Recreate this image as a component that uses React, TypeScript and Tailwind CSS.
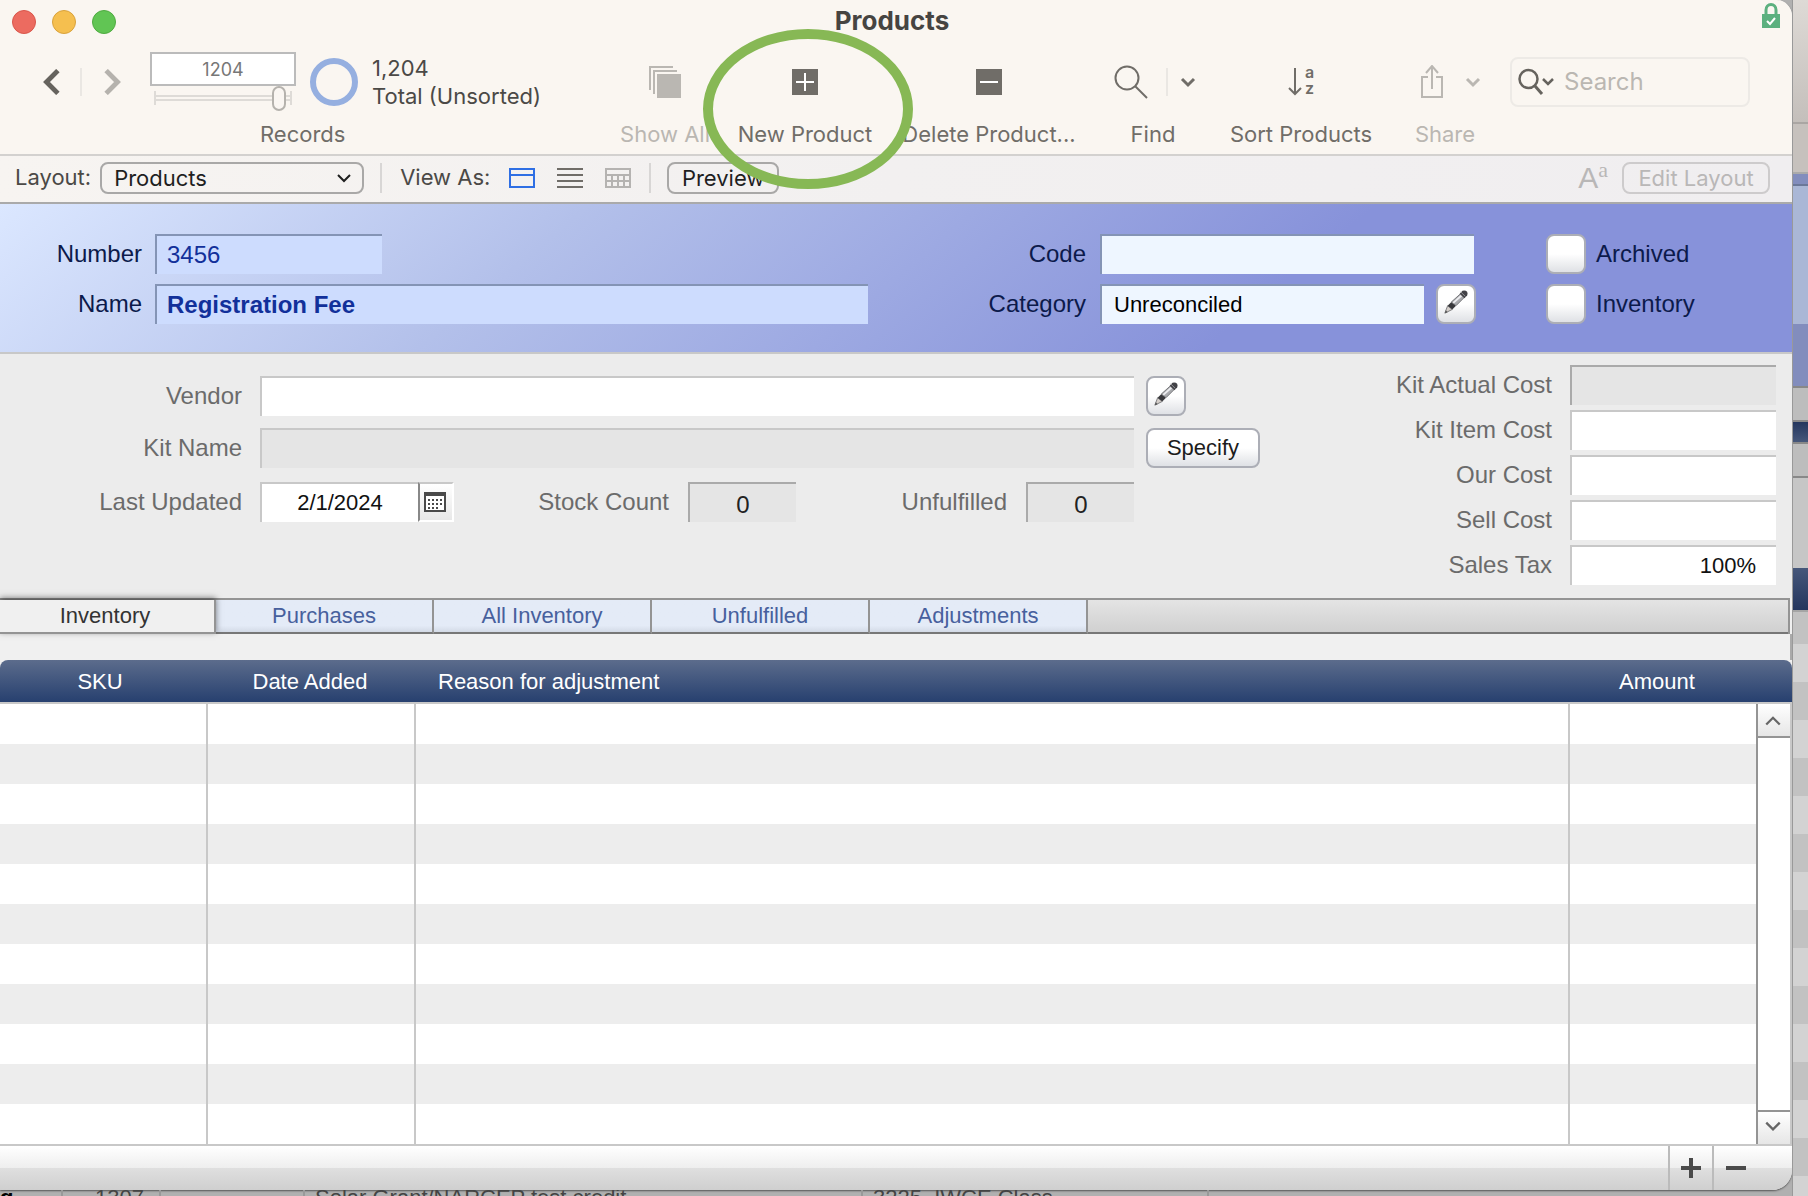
import type { ReactNode } from 'react'

const inputBase = 'h-10 rounded-none border-t-2 border-l-2 outline-none'
const tabs = ['Inventory', 'Purchases', 'All Inventory', 'Unfulfilled', 'Adjustments']
const costs = [
  { id: 'kit-actual', label: 'Kit Actual Cost', value: '', locked: true },
  { id: 'kit-item', label: 'Kit Item Cost', value: '', locked: false },
  { id: 'our-cost', label: 'Our Cost', value: '', locked: false },
  { id: 'sell-cost', label: 'Sell Cost', value: '', locked: false },
  { id: 'sales-tax', label: 'Sales Tax', value: '100%', locked: false },
]

function Chevron({ dir, size = 14, width = 3 }: { dir: 'up' | 'down' | 'left' | 'right'; size?: number; width?: number }) {
  const paths = {
    up: 'M2 12 8 6 14 12',
    down: 'M2 5 8 11 14 5',
    left: 'M11 1 4 8 11 15',
    right: 'M5 1 12 8 5 15',
  }
  return (
    <svg width={size} height={size} viewBox="0 0 16 16" fill="none" stroke="currentColor" strokeWidth={width} aria-hidden="true">
      <path d={paths[dir]} />
    </svg>
  )
}

function PencilButton({ label }: { label: string }) {
  return (
    <button
      aria-label={label}
      className="flex h-10 w-10 shrink-0 items-center justify-center rounded-lg border-2 border-[#acaeb6] bg-linear-to-b from-white from-50% to-[#dfe1e5] pb-1"
    >
      <svg width="26" height="26" viewBox="0 0 28 28" aria-hidden="true">
        <path d="M2 26 5 18 10 22Z" fill="#d5cfca" stroke="#77777a" strokeWidth="1" />
        <path d="m2 26 1-3 2 2Z" fill="#555" />
        <path d="M5 18 9 14 14 18 10 22Z" fill="#38383c" />
        <path d="M9 14 19 5 23 9 14 18Z" fill="#a9aaae" stroke="#6f7074" strokeWidth="1" />
        <path d="M11 15 20 7" stroke="#ededf0" strokeWidth="2" />
        <path d="M18 5 21 2Q24 1 26 3 27 5 26 7L23 10Z" fill="#424247" />
        <path d="m19 3 5 5" stroke="#9a9a9e" strokeWidth="1" />
      </svg>
    </button>
  )
}

function ToolItem({ label, icon, className, muted = false, children }: { label: string; icon: ReactNode; className: string; muted?: boolean; children?: ReactNode }) {
  return (
    <div className={`relative flex shrink-0 flex-col ${className} ${muted ? 'text-[#bab7b2]' : 'text-[#706d68]'}`}>
      <button disabled={muted} className="flex flex-col items-center whitespace-nowrap">
        <span className="flex h-[76px] items-center justify-center">{icon}</span>
        <span className="h-7 leading-7">{label}</span>
      </button>
      {children}
    </div>
  )
}

function TitleBar() {
  return (
    <div className="relative flex h-11 items-center pl-3">
      <div className="flex gap-4">
        <button aria-label="Close" className="size-6 rounded-full border border-[#d9564b] bg-[#ec6b60]" />
        <button aria-label="Minimise" className="size-6 rounded-full border border-[#d9a23c] bg-[#f5bf4f]" />
        <button aria-label="Zoom" className="size-6 rounded-full border border-[#4fab41] bg-[#61c554]" />
      </div>
      <h1 className="absolute inset-x-0 pr-2 pb-0.5 text-center text-[26px] font-bold text-[#464441]">Products</h1>
      <svg className="absolute top-[3px] right-3 h-[25px] w-[18px]" viewBox="0 0 18 25" aria-hidden="true">
        <path d="M4 12V7a5 5.500 0 0 1 10 0v5" fill="none" stroke="#5cb07f" strokeWidth="3" />
        <path d="M0 11h18v14H0z" fill="#5cb07f" />
        <path d="m5 18 3 3 5-6" fill="none" stroke="#fff" strokeWidth="2" />
      </svg>
    </div>
  )
}

function Toolbar() {
  return (
    <div className="flex h-[110px]">
      <div className="flex w-[610px] shrink-0 flex-col">
        <div className="flex h-[76px] items-center pl-10">
          <button aria-label="Previous record" className="text-[#66635e]"><Chevron dir="left" size={26} /></button>
          <span className="ml-[14px] h-7 w-0.5 bg-[#eae7e3]" />
          <button aria-label="Next record" className="ml-4 text-[#b5b2ad]"><Chevron dir="right" size={26} /></button>
          <div className="ml-[26px] flex w-[146px] flex-col">
            <input aria-label="Current record" defaultValue="1204" className="h-[34px] border-2 border-[#bbb] bg-white text-center text-lg text-[#777] outline-none" />
            <svg className="h-[26px] w-full" viewBox="0 0 146 26" aria-hidden="true">
              <path d="M5 5v14M141 5v14" stroke="#dedbd7" strokeWidth="2" />
              <path d="M5 10h136M5 14h136" stroke="#dedbd7" strokeWidth="2" />
              <rect x="123" y="1" width="12" height="23" rx="6" fill="#faf6f2" stroke="#b5b2ad" strokeWidth="2" />
            </svg>
          </div>
          <span className="ml-[14px] size-12 rounded-full border-6 border-[#95afe0]" />
          <p className="ml-[14px] leading-7 text-[#4b4946]">1,204<br />Total (Unsorted)</p>
        </div>
        <span className="h-7 pl-[260px] leading-7 text-[#706d68]">Records</span>
      </div>
      <ToolItem label="Show All" muted className="w-[110px]" icon={
        <svg width="32" height="32" viewBox="0 0 32 32" fill="none" stroke="currentColor" strokeWidth="2">
          <path d="M1 24V1h23M5 28V5h23" /><path d="M8 8h24v24H8z" fill="currentColor" stroke="none" />
        </svg>
      } />
      <ToolItem label="New Product" className="w-[170px]" icon={
        <svg width="26" height="26" viewBox="0 0 26 26"><path d="M0 0h26v26H0z" fill="currentColor" /><path d="M4 13h18M13 4v18" stroke="#fff" strokeWidth="2" /></svg>
      }>
        <span className="pointer-events-none absolute -top-[15px] left-1/2 z-10 ml-[3px] h-40 w-[210px] -translate-x-1/2 rounded-[50%] border-10 border-[#87b855]" />
      </ToolItem>
      <ToolItem label="Delete Product..." className="w-[198px]" icon={
        <svg width="26" height="26" viewBox="0 0 26 26"><path d="M0 0h26v26H0z" fill="currentColor" /><path d="M4 13h18" stroke="#fff" strokeWidth="2" /></svg>
      } />
      <ToolItem label="Find" className="w-[130px]" icon={
        <span className="flex items-center pl-1">
          <svg width="34" height="34" viewBox="0 0 34 34" fill="none" stroke="currentColor" strokeWidth="2"><circle cx="13" cy="13" r="11.500" /><path d="m21 21 12 12" /></svg>
          <span className="mr-3 ml-[18px] h-7 w-0.5 bg-[#eae7e3]" />
          <Chevron dir="down" size={16} />
        </span>
      } />
      <ToolItem label="Sort Products" className="w-[166px]" icon={
        <span className="flex items-center">
          <svg width="14" height="28" viewBox="0 0 14 28" fill="none" stroke="currentColor" strokeWidth="2"><path d="M7 0v26M1 20l6 6 6-6" /></svg>
          <span className="flex flex-col pb-1 pl-[3px] text-base leading-4 font-semibold"><span>a</span><span>z</span></span>
        </span>
      } />
      <ToolItem label="Share" muted className="w-[122px]" icon={
        <span className="flex items-center gap-[22px] pl-3">
          <svg width="22" height="34" viewBox="0 0 22 34" fill="none" stroke="currentColor" strokeWidth="2"><path d="M7 12H1v20h20V12h-6M11 24V1M5 8l6-7 6 7" /></svg>
          <Chevron dir="down" size={16} />
        </span>
      } />
      <label className="mt-[13px] mr-[42px] ml-auto flex h-[50px] w-60 items-center rounded-lg border-2 border-[#edeae6] pl-1.5 text-[#66635e]">
        <svg className="shrink-0" width="36" height="30" viewBox="0 0 36 30" fill="none" stroke="currentColor" strokeWidth="2.500" aria-hidden="true">
          <circle cx="10.500" cy="12" r="9" /><path d="m17 19 7 8" strokeWidth="3" /><path d="m25 12 5 5 5-5" />
        </svg>
        <input aria-label="Search" placeholder="Search" className="ml-[10px] min-w-0 flex-1 bg-transparent text-2xl outline-none placeholder:text-[#bab7b2]" />
      </label>
    </div>
  )
}

function LayoutBar() {
  return (
    <div className="flex h-[50px] items-center border-t-2 border-b-2 border-t-[#d3d1cf] border-b-[#aaa] bg-linear-to-r from-[#f7f4f1] via-[#f2f0f0] to-[#f0eef0] pr-[22px] pb-0.5 pl-[15px] text-[#4b4946]">
      <label htmlFor="layout">Layout:</label>
      <span className="relative ml-[9px] flex items-center">
        <select id="layout" className="h-8 w-[264px] appearance-none rounded-lg border-2 border-[#a9a8a7] bg-transparent px-3 leading-7 text-[#1f1f1f]">
          <option>Products</option>
        </select>
        <span className="pointer-events-none absolute right-3 text-[#1f1f1f]"><Chevron dir="down" size={16} width={2} /></span>
      </span>
      <span className="ml-4 h-[30px] w-0.5 bg-[#d8d6d5]" />
      <span className="ml-[18px] w-[109px]">View As:</span>
      <button aria-label="Form view" className="text-[#2f6fe4]">
        <svg width="26" height="20" viewBox="0 0 26 20" fill="none" stroke="currentColor" strokeWidth="2"><path d="M1 1h24v18H1zM1 7h24" /></svg>
      </button>
      <button aria-label="List view" className="ml-[22px] text-[#706d68]">
        <svg width="26" height="20" viewBox="0 0 26 20" stroke="currentColor" strokeWidth="2"><path d="M0 1h26M0 7h26M0 13h26M0 19h26" /></svg>
      </button>
      <button aria-label="Table view" className="ml-[22px] text-[#b5b3b1]">
        <svg width="26" height="20" viewBox="0 0 26 20" fill="none" stroke="currentColor" strokeWidth="2"><path d="M1 1h24v18H1zM1 7h24M1 13h24M7 7v12M13 7v12M19 7v12" /></svg>
      </button>
      <span className="ml-[18px] h-[30px] w-0.5 bg-[#d8d6d5]" />
      <button className="ml-4 h-8 w-28 rounded-lg border-2 border-[#a9a8a7] leading-7 text-[#1f1f1f]">Preview</button>
      <button disabled aria-label="Text formatting" className="ml-auto flex h-8 items-start text-[#b9b7b7]">
        <span className="font-['Liberation_Sans',sans-serif] text-[30px] leading-8">A</span>
        <span className="font-['Liberation_Serif',serif] text-[22px] leading-4">a</span>
      </button>
      <button disabled className="ml-[14px] h-8 w-[148px] rounded-lg border-2 border-[#cdcbcc] leading-7 text-[#b9b7b7]">Edit Layout</button>
    </div>
  )
}

function ProductHeader() {
  const blue = 'border-t-[#8494b5] border-l-[#8494b5] bg-[#cddcfe] text-[#12309a]'
  const pale = 'border-t-[#8494b5] border-l-[#8494b5] bg-[#eef6ff] text-black'
  return (
    <div className="flex h-[150px] border-b-2 border-[#c8c8c8] bg-[linear-gradient(140deg,#dbe7ff_0%,#b3c0ea_30%,#8792da_70%,#8792da_100%)] pt-[30px] text-[#0c1a4b]">
      <div className="flex flex-col gap-[10px]">
        <div className="flex items-center">
          <label htmlFor="number" className="w-[142px] text-right">Number</label>
          <input id="number" defaultValue="3456" className={`${inputBase} ${blue} ml-[13px] w-[227px] pl-[10px]`} />
        </div>
        <div className="flex items-center">
          <label htmlFor="name" className="w-[142px] text-right">Name</label>
          <input id="name" defaultValue="Registration Fee" className={`${inputBase} ${blue} ml-[13px] w-[713px] pl-[10px] font-bold`} />
        </div>
      </div>
      <div className="ml-auto flex flex-col gap-[10px]">
        <div className="flex items-center">
          <label htmlFor="code" className="w-[100px] text-right">Code</label>
          <input id="code" className={`${inputBase} ${pale} ml-[14px] w-[374px] pl-3`} />
        </div>
        <div className="flex items-center">
          <label htmlFor="category" className="w-[100px] text-right">Category</label>
          <input id="category" defaultValue="Unreconciled" className={`${inputBase} ${pale} mr-3 ml-[14px] w-[324px] pl-3 text-[22px]`} />
          <PencilButton label="Edit category" />
        </div>
      </div>
      <div className="ml-[70px] flex w-[246px] flex-col gap-[10px]">
        {['Archived', 'Inventory'].map(name => (
          <label key={name} className="flex h-10 items-center gap-[10px]">
            <input type="checkbox" className="size-10 appearance-none rounded-lg border-2 border-[#acaeb6] bg-linear-to-b from-white from-50% to-[#dfe1e5]" />
            {name}
          </label>
        ))}
      </div>
    </div>
  )
}

function Details() {
  const white = 'border-t-[#c8c8c8] border-l-[#c8c8c8] bg-white text-[#111]'
  const gray = 'border-t-[#c8c8c8] border-l-[#c8c8c8] bg-[#e5e5e5] text-[#222]'
  const count = 'border-t-[#aaa] border-l-[#aaa] bg-[#e5e5e5] text-[#222]'
  return (
    <div className="flex h-[244px] justify-between bg-[#ececec] pt-[11px] pr-4 text-[#6b6b6b]">
      <div className="pt-[11px]">
        <div className="flex items-center">
          <label htmlFor="vendor" className="w-[242px] text-right">Vendor</label>
          <input id="vendor" className={`${inputBase} ${white} mr-3 ml-[18px] w-[874px] pl-3`} />
          <PencilButton label="Edit vendor" />
        </div>
        <div className="mt-3 flex items-center">
          <label htmlFor="kit-name" className="w-[242px] text-right">Kit Name</label>
          <input id="kit-name" readOnly className={`${inputBase} ${gray} mr-3 ml-[18px] w-[874px] pl-3`} />
          <button className="h-10 w-[114px] rounded-lg border-2 border-[#acaeb6] bg-linear-to-b from-white from-50% to-[#dfe1e5] text-[22px] text-[#1c1c1c]">Specify</button>
        </div>
        <div className="mt-[14px] flex items-center">
          <label htmlFor="updated" className="w-[242px] text-right">Last Updated</label>
          <input id="updated" defaultValue="2/1/2024" className={`${inputBase} ${white} ml-[18px] w-[158px] text-center text-[22px]`} />
          <button aria-label="Open calendar" className="flex h-10 w-9 items-center justify-center border-t-2 border-r-2 border-b-2 border-l-2 border-t-[#c8c8c8] border-r-white border-b-white border-l-[#888] bg-linear-to-b from-white to-[#e8e8e8] pr-0.5">
            <svg width="22" height="20" viewBox="0 0 22 20" aria-hidden="true">
              <path d="M1 1h20v18H1z" fill="#fff" stroke="#4a4a4a" strokeWidth="2" />
              <path d="M0 0h22v4H0z" fill="#4a4a4a" />
              <path d="M4 8h14M4 12h14M4 16h11" stroke="#4a4a4a" strokeWidth="2" strokeDasharray="2 2" />
            </svg>
          </button>
          <label htmlFor="stock" className="w-[215px] text-right">Stock Count</label>
          <input id="stock" readOnly value="0" className={`${inputBase} ${count} ml-[19px] w-[108px] pt-1 text-center`} />
          <label htmlFor="unfulfilled" className="w-[211px] text-right">Unfulfilled</label>
          <input id="unfulfilled" readOnly value="0" className={`${inputBase} ${count} ml-[19px] w-[108px] pt-1 text-center`} />
        </div>
      </div>
      <div className="flex flex-col gap-[5px]">
        {costs.map(c => (
          <div key={c.id} className="flex items-center justify-end">
            <label htmlFor={c.id}>{c.label}</label>
            <input id={c.id} defaultValue={c.value} readOnly={c.locked} className={`${inputBase} ${c.locked ? count : white} ml-[18px] w-[206px] pr-5 text-right text-[22px]`} />
          </div>
        ))}
      </div>
    </div>
  )
}

function TabBar() {
  return (
    <div role="tablist" className="mr-0.5 flex h-9 border-t-2 border-r-2 border-[#949494] bg-linear-to-b from-[#e4e4e4] to-[#cfcfcf] text-[22px]">
      {tabs.map((name, i) => (
        <button
          key={name}
          role="tab"
          aria-selected={i === 0}
          className={`border-r-2 border-b-2 border-r-[#949494] ${i === 0 ? 'relative w-[216px] border-b-[#949494] bg-[#f0f0f0] pr-1 text-[#333] shadow-[0_-2px_6px_rgba(0,0,0,0.5)]' : 'w-[218px] border-b-[#777] bg-linear-to-b from-[#e4ebf7] from-80% to-[#d3dae6] text-[#47609d]'}`}
        >
          {name}
        </button>
      ))}
      <span className="flex-1 border-b-2 border-[#777]" />
    </div>
  )
}

function AdjustmentTable() {
  const cell = 'border-r-2 border-[#c8c8c8]'
  return (
    <div className="grid grid-cols-[1fr_36px] grid-rows-[44px_1fr]">
      <div className="col-span-2 col-start-1 row-start-1 rounded-t-lg border-b-2 border-[#c8c8c8] bg-linear-to-b from-[#5c6c8c] to-[#27406f]" />
      <table className="col-start-1 row-span-2 row-start-1 w-full table-fixed border-separate border-spacing-0 text-[22px]">
        <thead>
          <tr className="h-11 text-white">
            <th className="w-[208px] pr-2 font-medium">SKU</th>
            <th className="w-[208px] pr-1 font-medium">Date Added</th>
            <th className="pl-[22px] text-left font-medium">Reason for adjustment</th>
            <th className="w-[186px] pr-3 font-medium">Amount</th>
          </tr>
        </thead>
        <tbody>
          {Array.from({ length: 11 }, (_, i) => (
            <tr key={i} className="h-10 odd:bg-white even:bg-[#ededed]">
              <td className={cell} />
              <td className={cell} />
              <td className={cell} />
              <td />
            </tr>
          ))}
        </tbody>
      </table>
      <div className="col-start-2 row-start-2 flex flex-col justify-between border-r-2 border-l-2 border-r-[#c8c8c8] border-l-[#949494] bg-white text-[#666]">
        <button aria-label="Scroll up" className="flex h-[34px] items-center justify-center border-b-2 border-[#949494] bg-linear-to-b from-white to-[#e6e6e6] pr-0.5"><Chevron dir="up" size={18} width={2} /></button>
        <button aria-label="Scroll down" className="flex h-[34px] items-center justify-center border-t-2 border-[#949494] bg-linear-to-b from-white to-[#e6e6e6] pr-0.5 pb-1"><Chevron dir="down" size={18} width={2} /></button>
      </div>
    </div>
  )
}

function Footer() {
  return (
    <div className="flex h-[46px] justify-end border-t-2 border-[#c8c8c8] bg-[linear-gradient(#fff_0%,#eee_50%,#dfdfdf_50%,#cfcfcf_100%)] pr-[34px] text-[#4a4a4a]">
      <button aria-label="Add row" className="flex w-11 items-center justify-center border-l-2 border-[#bbb]">
        <svg width="20" height="20" viewBox="0 0 20 20" stroke="currentColor" strokeWidth="4"><path d="M0 10h20M10 0v20" /></svg>
      </button>
      <button aria-label="Remove row" className="flex w-[46px] items-center justify-center border-l-2 border-[#bbb]">
        <svg width="20" height="20" viewBox="0 0 20 20" stroke="currentColor" strokeWidth="4"><path d="M0 10h20" /></svg>
      </button>
    </div>
  )
}

// Sliver of the window that sits behind this one
function BackWindowEdge() {
  return (
    <div className="flex w-4 shrink-0 flex-col border-l border-[#999]">
      <div className="h-[122px] bg-linear-to-b from-[#dedad6] to-[#c4bfbb]" />
      <div className="h-[50px] border-t-2 border-[#aaa6a3] bg-[#c6c1bd]" />
      <div className="h-3 border-t-2 border-[#aaa] bg-[#828dbd]" />
      <div className="h-[140px] border-t-2 border-[#6b7899] bg-[#aab7d6]" />
      <div className="h-[62px] bg-[#828dbd]" />
      <div className="h-9 border-y-2 border-[#888] bg-[#bdbdbd]" />
      <div className="h-5 bg-linear-to-b from-[#24365e] to-[#46577a]" />
      <div className="h-9 border-y-2 border-[#888] bg-[#bdbdbd]" />
      <div className="h-[90px] bg-[#c6c6c6]" />
      <div className="h-[42px] bg-linear-to-b from-[#46577a] to-[#24365e]" />
      <div className="h-[34px] border-t-2 border-[#a5a5a5] bg-[#c2c2c2]" />
      <div className="flex-1 bg-[repeating-linear-gradient(#d3d3d3_0,#d3d3d3_38px,#c2c2c2_38px,#c2c2c2_76px)]" />
    </div>
  )
}

export default function App() {
  return (
    <div className="flex h-screen overflow-hidden bg-[#b0b0b0] font-['Liberation_Sans',Arial,sans-serif] text-2xl">
      <div className="flex min-w-0 flex-1 flex-col">
        <main className="shrink-0 overflow-hidden rounded-tr-2xl rounded-br-[20px] bg-[#f0f0f0] shadow-[0_1px_2px_#555]">
          <div className="bg-[#faf6f1] font-[Inter,sans-serif] text-[22px]">
            <TitleBar />
            <Toolbar />
            <LayoutBar />
          </div>
          <ProductHeader />
          <Details />
          <TabBar />
          <div className="h-[26px] border-r-2 border-[#aaa]" />
          <AdjustmentTable />
          <Footer />
        </main>
        <div className="flex h-[6px] shrink-0 overflow-hidden text-[22px] leading-4 whitespace-nowrap text-[#444]">
          <span className="w-[61px] font-bold text-black">g-</span>
          <span className="w-[98px] border-l-2 border-[#999] pl-8">1307</span>
          <span className="w-[144px] border-l-2 border-[#999]" />
          <span className="w-[558px] border-l-2 border-[#999] pl-[10px]">Solar Grant/NARCEP test credit</span>
          <span className="w-[346px] border-l-2 border-[#999] pl-[10px]">3225&nbsp; IWCE Class</span>
          <span className="flex-1 border-l-2 border-[#999]" />
        </div>
      </div>
      <BackWindowEdge />
    </div>
  )
}
